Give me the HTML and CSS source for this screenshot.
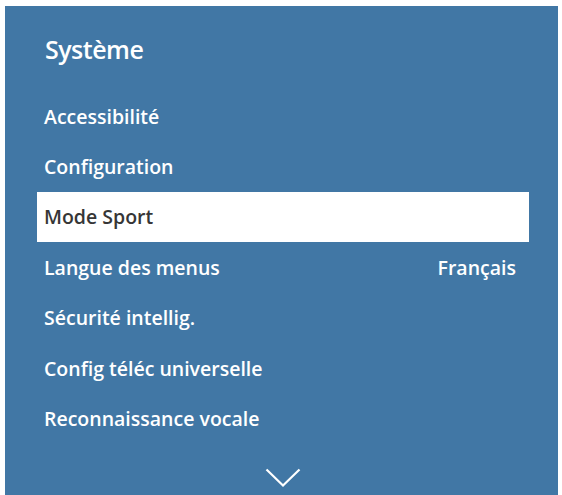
FILE: index.html
```html
<!DOCTYPE html>
<html>
<head>
<meta charset="utf-8">
<link rel="stylesheet" href="styles.css">
</head>
<body>
<div class="panel">
  <h1 class="title">Système</h1>
  <ul class="menu">
    <li class="item">Accessibilité</li>
    <li class="item">Configuration</li>
    <li class="item selected">Mode Sport</li>
    <li class="item"><span>Langue des menus</span><span class="value">Français</span></li>
    <li class="item">Sécurité intellig.</li>
    <li class="item">Config téléc universelle</li>
    <li class="item">Reconnaissance vocale</li>
  </ul>
  <div class="more">
    <svg width="36" height="20" viewBox="0 0 36 20"><polyline points="1.5,1.5 18,17.5 34.5,1.5" fill="none" stroke="#fff" stroke-width="2.2"/></svg>
  </div>
</div>
</body>
</html>
```

FILE: styles.css
```css
html, body {
  margin: 0;
  padding: 0;
  background: #fff;
}
body {
  padding: 6px 4px 0 5px;
  height: 495px;
  box-sizing: border-box;
  overflow: hidden;
  font-family: "Open Sans", "Liberation Sans", sans-serif;
}
.panel {
  background: #4177a5;
  height: 489px;
  padding: 0 29px 0 32px;
  box-sizing: border-box;
  display: flex;
  flex-direction: column;
}
.title {
  margin: 0;
  height: 85px;
  padding: 0 0 0 8px;
  display: flex;
  align-items: center;
  color: #fff;
  font-size: 25px;
  font-weight: 600;
  letter-spacing: -0.5px;
}
.menu {
  list-style: none;
  margin: 0;
  padding: 0;
}
.item {
  height: 50.4px;
  display: flex;
  align-items: center;
  justify-content: space-between;
  padding: 0 13px 0 7px;
  color: #fff;
  font-size: 19.5px;
  font-weight: 600;
  letter-spacing: 0;
}
.item.selected {
  background: #fff;
  color: #363636;
}
.more {
  display: flex;
  justify-content: center;
  padding-top: 24px;
}
```
